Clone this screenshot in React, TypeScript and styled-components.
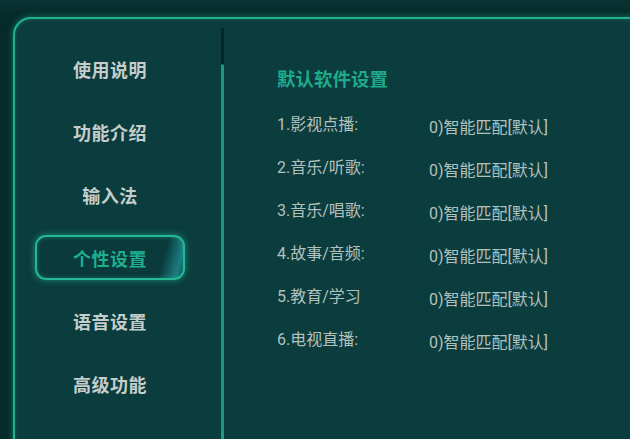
import React from "react";
import styled, { createGlobalStyle } from "styled-components";

const Global = createGlobalStyle`
  html, body { margin: 0; padding: 0; }
  body {
    background: #072f2e;
    font-family: Roboto, "Noto Sans CJK SC", sans-serif;
    overflow: hidden;
    width: 630px;
    height: 439px;
  }
`;

const Page = styled.div`
  width: 630px;
  height: 439px;
  overflow: hidden;
  padding: 17px 0 0 13px;
  box-sizing: border-box;
  background: linear-gradient(180deg, #083433 0px, #062a29 17px);
`;

const Panel = styled.div`
  width: 660px;
  height: 460px;
  box-sizing: border-box;
  border: 2px solid #22b08f;
  border-radius: 18px;
  background: #0b3c3e;
  box-shadow: 0 0 6px rgba(34, 190, 150, 0.55), inset 0 0 4px rgba(34, 190, 150, 0.35);
  display: grid;
  grid-template-columns: 206px 3px 1fr;
`;

const Sidebar = styled.nav`
  display: flex;
  flex-direction: column;
  gap: 18px;
  padding: 27px 0 0 20px;
`;

const NavItem = styled.div<{ $active?: boolean }>`
  width: 150px;
  height: 45px;
  box-sizing: border-box;
  display: flex;
  align-items: center;
  justify-content: center;
  font-family: "Noto Sans CJK SC", sans-serif;
  font-size: 18px;
  font-weight: 700;
  letter-spacing: 0.5px;
  color: ${(p) => (p.$active ? "#1fae8e" : "#c5cecb")};
  border-radius: 11px;
  border: 2px solid ${(p) => (p.$active ? "#24b895" : "transparent")};
  background: ${(p) =>
    p.$active
      ? "linear-gradient(105deg, #0a3a3b 0%, #0a3a3b 84%, #1b7d80 95%, #0d4a4b 100%)"
      : "transparent"};
  box-shadow: ${(p) =>
    p.$active
      ? "0 0 7px rgba(40, 210, 165, 0.55), inset 0 0 5px rgba(40, 210, 165, 0.35)"
      : "none"};
`;

const Divider = styled.div`
  margin-top: 9px;
  width: 3px;
  background: linear-gradient(180deg, #052626 0px, #052626 36px, #1b9a7d 37px, #1b9a7d 100%);
`;

const Content = styled.section`
  padding: 47px 0 0 53px;
  display: flex;
  flex-direction: column;
`;

const Title = styled.h2`
  margin: 0 0 25px;
  font-family: "Noto Sans CJK SC", sans-serif;
  font-size: 18.5px;
  line-height: 24px;
  font-weight: 700;
  color: #1eaa8b;
`;

const Row = styled.div`
  display: grid;
  grid-template-columns: 152px 1fr;
  height: 43px;
  font-size: 16px;
  line-height: 20px;
  color: #b3c1bd;
`;

const Label = styled.span``;

const Value = styled.span`
  padding-top: 3px;
`;

const navItems = ["使用说明", "功能介绍", "输入法", "个性设置", "语音设置", "高级功能"];
const rows = [
  "1.影视点播:",
  "2.音乐/听歌:",
  "3.音乐/唱歌:",
  "4.故事/音频:",
  "5.教育/学习",
  "6.电视直播:",
];

export default function App() {
  return (
    <>
      <Global />
      <Page>
        <Panel>
          <Sidebar>
            {navItems.map((n) => (
              <NavItem key={n} $active={n === "个性设置"}>
                {n}
              </NavItem>
            ))}
          </Sidebar>
          <Divider />
          <Content>
            <Title>默认软件设置</Title>
            {rows.map((r) => (
              <Row key={r}>
                <Label>{r}</Label>
                <Value>0)智能匹配[默认]</Value>
              </Row>
            ))}
          </Content>
        </Panel>
      </Page>
    </>
  );
}
